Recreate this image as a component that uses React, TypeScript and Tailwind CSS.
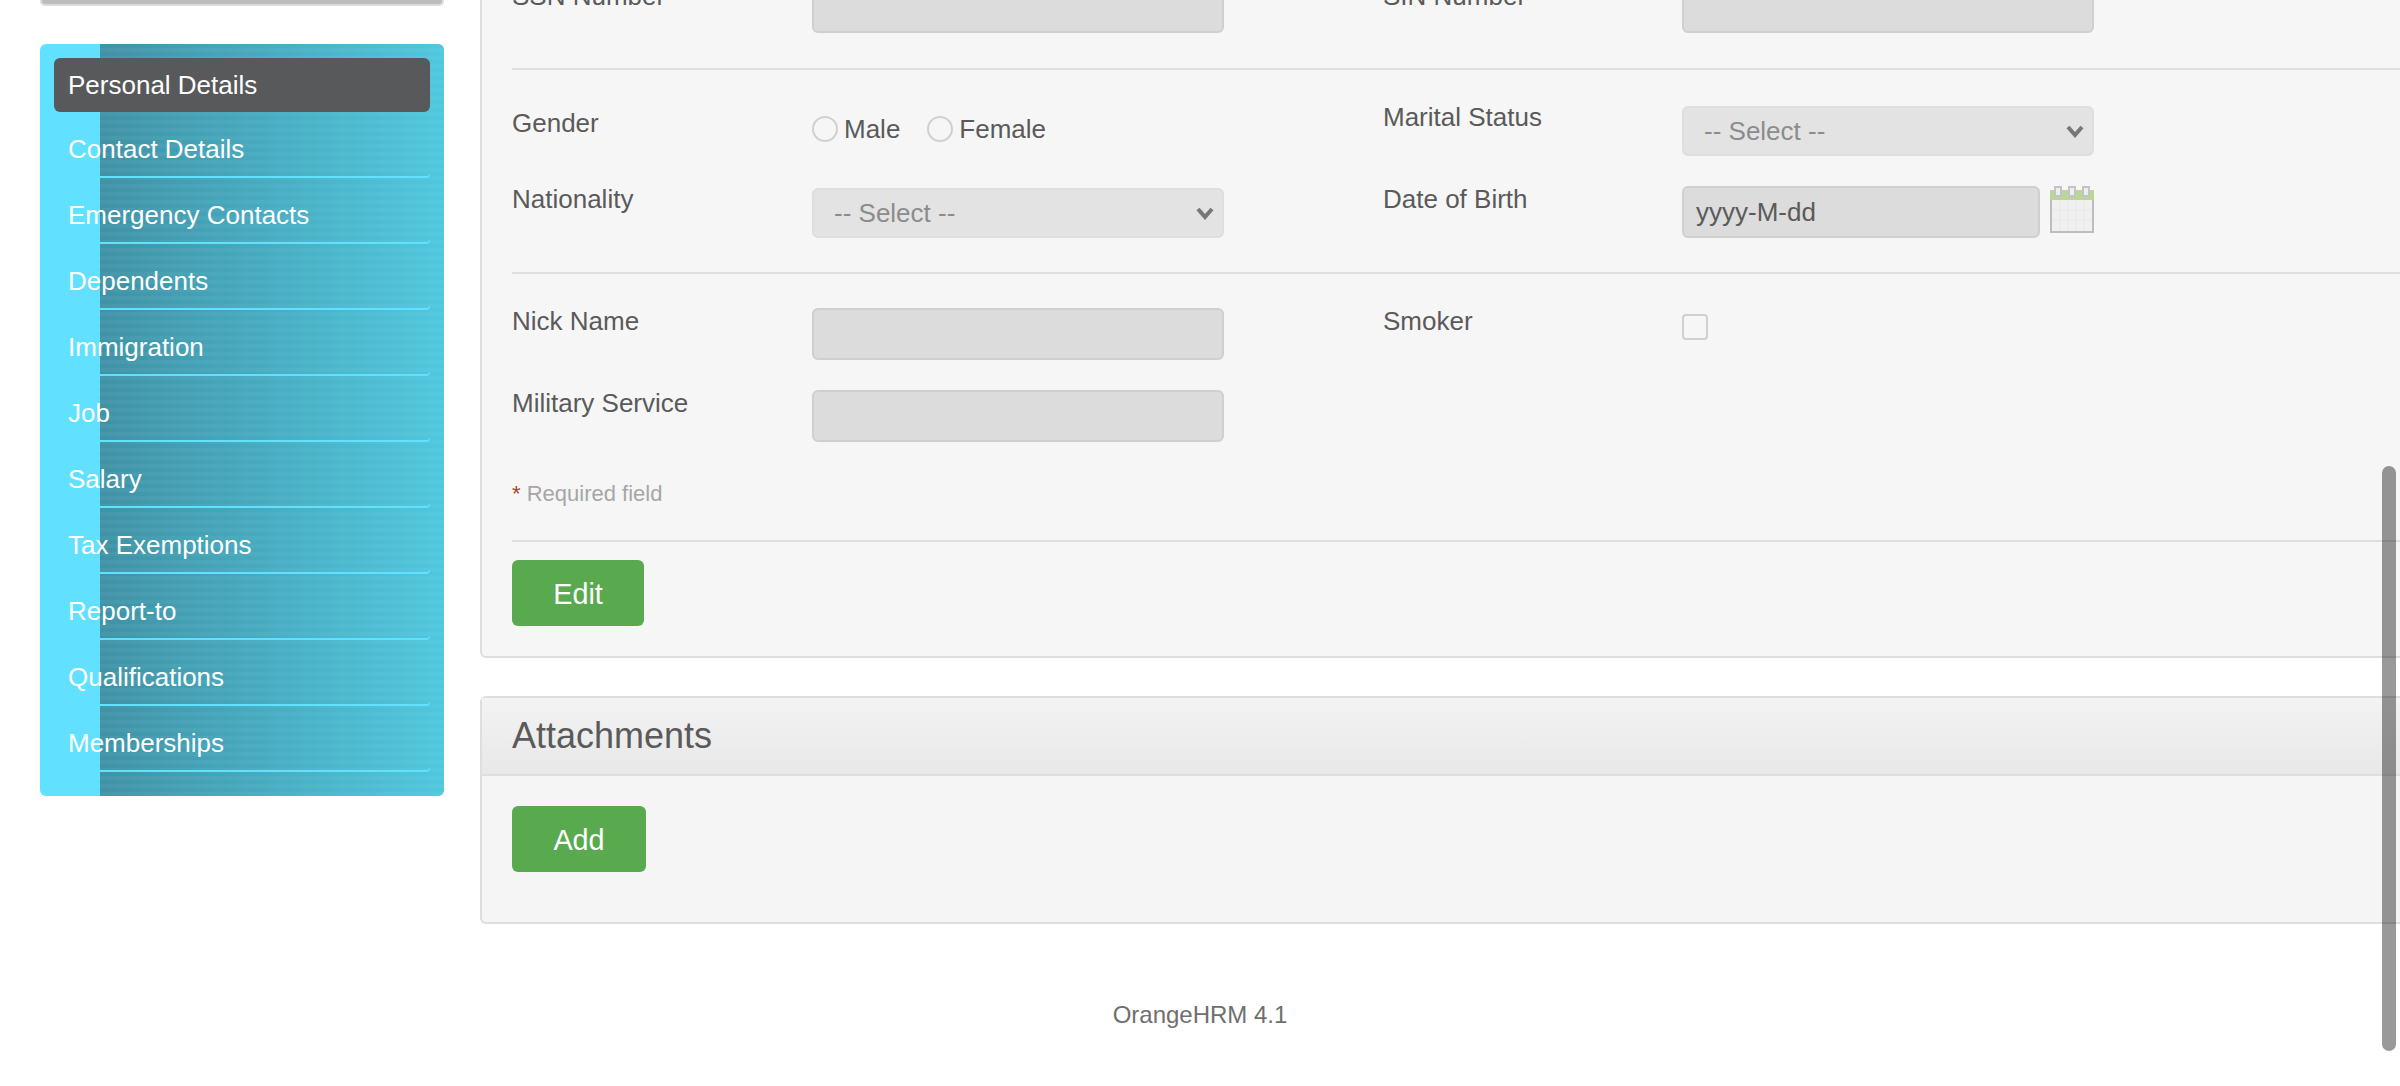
import React from 'react';

const sideItems = [
  'Contact Details',
  'Emergency Contacts',
  'Dependents',
  'Immigration',
  'Job',
  'Salary',
  'Tax Exemptions',
  'Report-to',
  'Qualifications',
  'Memberships',
];

const Label: React.FC<{ text: string; className?: string }> = ({ text, className }) => (
  <label className={`block shrink-0 text-[26px] leading-[30px] text-[#5a5a5a] ${className ?? 'w-[300px]'}`}>{text}</label>
);

const TextBox: React.FC = () => (
  <input disabled className="block w-[412px] h-[52px] rounded-[6px] border-2 border-[#cfcfcf] bg-[#dcdcdc]" />
);

const SelectBox: React.FC = () => (
  <div className="flex items-center justify-between w-[412px] h-[50px] pl-[20px] pr-[8px] rounded-[6px] border-2 border-[#dedede] bg-[#e3e3e3] text-[26px] text-[#8c8c8c]">
    <span>-- Select --</span>
    <svg width="18" height="14" viewBox="0 0 18 14">
      <path d="M2 3l7 8 7-8" fill="none" stroke="#777" strokeWidth="4" />
    </svg>
  </div>
);

const Radio: React.FC<{ text: string }> = ({ text }) => (
  <span className="flex items-center gap-[6px] text-[26px] text-[#5a5a5a]">
    <span className="block w-[26px] h-[26px] rounded-full border-2 border-[#d0d0d0] bg-[#f6f6f6]" />
    {text}
  </span>
);

const CalendarIcon: React.FC = () => (
  <svg width="44" height="47" viewBox="0 0 44 47" className="shrink-0">
    <rect x="0" y="4" width="44" height="43" fill="#bdbdbd" />
    <rect x="2" y="14" width="40" height="31" fill="#f0f0f0" />
    <rect x="0" y="4" width="44" height="10" fill="#bcd69a" />
    <g fill="#eeeeee" stroke="#c4c4c4" strokeWidth="2">
      <rect x="5" y="1" width="6" height="9" />
      <rect x="19" y="1" width="6" height="9" />
      <rect x="33" y="1" width="6" height="9" />
    </g>
    <g stroke="#e9e9e9" strokeWidth="1">
      <path d="M10 14v31M18 14v31M26 14v31M34 14v31M2 24h40M2 34h40" />
    </g>
  </svg>
);

const App: React.FC = () => {
  return (
    <div className="relative h-[1086px] overflow-hidden bg-white font-['Liberation_Sans',Arial,sans-serif]">
      <div className="flex items-start pl-[40px] -mr-[20px]">
        {/* Left column */}
        <div className="w-[404px] shrink-0">
          <div className="h-[6px] rounded-b-[5px] border-x-2 border-b-2 border-[#dcdcdc] bg-[#bdbdbd]" />
          <div className="mt-[38px] h-[752px] rounded-[6px] bg-[#61e1ff] pt-[14px] overflow-hidden relative">
            <div className="absolute left-[60px] right-0 top-0 bottom-0 bg-[repeating-linear-gradient(180deg,rgba(255,255,255,0)_0,rgba(255,255,255,0)_4px,rgba(255,255,255,0.04)_4px,rgba(255,255,255,0.04)_8px),linear-gradient(90deg,#3f92a5,#4fc8df)]" />
            <ul className="relative">
              <li className="mx-[14px] h-[54px] flex items-center pl-[14px] rounded-[6px] bg-[#58595b] text-[26px] text-white">
                Personal Details
              </li>
              {sideItems.map(item => (
                <li key={item} className="relative h-[66px] flex items-center pl-[28px] pt-[8px] text-[26px] text-white">
                  {item}
                  <span className="absolute left-[60px] right-[14px] bottom-0 h-[4px] rounded-br-[4px] border-b-2 border-r border-[#61e1ff]" />
                </li>
              ))}
            </ul>
          </div>
        </div>

        {/* Main column */}
        <div className="flex-1 ml-[36px]">
          <div className="-mt-[40px] rounded-[6px] border-2 border-[#dedede] bg-[#f6f6f6] pl-[30px]">
            <div className="flex border-b-2 border-[#dedede] pt-[19px] h-[108px]">
              <div className="flex w-[871px]">
                <Label text="SSN Number" />
                <TextBox />
              </div>
              <div className="flex">
                <Label text="SIN Number" className="w-[299px]" />
                <TextBox />
              </div>
            </div>
            <div className="border-b-2 border-[#dedede] h-[204px] pt-[36px]">
              <div className="flex h-[82px]">
                <div className="flex w-[871px]">
                  <Label text="Gender" className="w-[300px] mt-[2px]" />
                  <div className="flex gap-[27px] mt-[10px] h-[26px] items-center">
                    <Radio text="Male" />
                    <Radio text="Female" />
                  </div>
                </div>
                <div className="flex">
                  <Label text="Marital Status" className="w-[299px] -mt-[4px]" />
                  <SelectBox />
                </div>
              </div>
              <div className="flex">
                <div className="flex w-[871px]">
                  <Label text="Nationality" className="w-[300px] -mt-[4px]" />
                  <SelectBox />
                </div>
                <div className="flex">
                  <Label text="Date of Birth" className="w-[299px] -mt-[4px]" />
                  <div className="flex w-[412px] gap-[10px] items-start -mt-[2px]">
                    <div className="w-[358px] h-[52px] flex items-center pl-[12px] rounded-[6px] border-2 border-[#cfcfcf] bg-[#dcdcdc] text-[26px] text-[#5a5a5a]">
                      yyyy-M-dd
                    </div>
                    <CalendarIcon />
                  </div>
                </div>
              </div>
            </div>
            <div className="pt-[34px] h-[268px] border-b-2 border-[#dedede]">
              <div className="flex h-[82px]">
                <div className="flex w-[871px]">
                  <Label text="Nick Name" className="w-[300px] -mt-[2px]" />
                  <TextBox />
                </div>
                <div className="flex">
                  <Label text="Smoker" className="w-[299px] -mt-[2px]" />
                  <span className="block mt-[6px] w-[26px] h-[26px] rounded-[4px] border-2 border-[#d0d0d0] bg-[#f6f6f6]" />
                </div>
              </div>
              <div className="flex">
                <Label text="Military Service" className="w-[300px] -mt-[2px]" />
                <TextBox />
              </div>
              <p className="mt-[39px] text-[22px] leading-[26px] text-[#a6a6a6]">
                <span className="text-[#a5452f]">*</span> Required field
              </p>
            </div>
            <div className="pt-[18px] pb-[30px]">
              <button className="block w-[132px] h-[66px] pt-[3px] rounded-[6px] bg-[#59aa4f] text-[28.8px] text-white">Edit</button>
            </div>
          </div>

          <div className="mt-[38px] rounded-[6px] border-2 border-[#dedede] bg-[#f5f5f5]">
            <div className="h-[78px] flex items-center pl-[30px] border-b-2 border-[#dedede] bg-[linear-gradient(180deg,#f3f3f3,#e8e8e8)] text-[36px] text-[#5a5a5a]">
              Attachments
            </div>
            <div className="pt-[30px] pl-[30px] pb-[50px]">
              <button className="block w-[134px] h-[66px] pt-[3px] rounded-[6px] bg-[#59aa4f] text-[28.8px] text-white">Add</button>
            </div>
          </div>
        </div>
      </div>

      <p className="mt-[76px] text-center text-[24px] leading-[30px] text-[#6f6f6f]">OrangeHRM 4.1</p>

      {/* Overlay scrollbar */}
      <div className="absolute left-[2382px] top-[466px] w-[14px] h-[585px] rounded-full bg-black/40" />
    </div>
  );
};

export default App;
